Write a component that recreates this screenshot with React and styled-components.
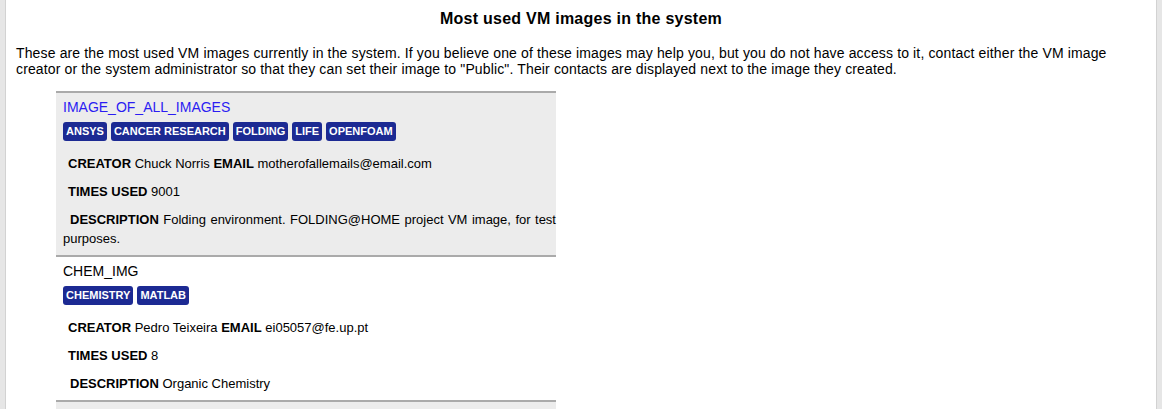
import React from 'react';
import styled, { createGlobalStyle } from 'styled-components';

const GlobalStyle = createGlobalStyle`
  html, body {
    margin: 0;
    padding: 0;
    overflow: hidden;
    background: #e6e6e6;
    font-family: "Liberation Sans", Arial, sans-serif;
    color: #000;
  }
`;

const Frame = styled.div`
  display: flex;
  min-height: 100vh;
  padding: 0 5px;
  background: #e6e6e6;
`;

const Page = styled.div`
  flex: 1;
  background: #fff;
  border-left: 1px solid #d2d2d2;
  border-right: 1px solid #d2d2d2;
  padding: 9px 10px 0;
`;

const Heading = styled.h2`
  margin: 0;
  font-size: 16px;
  font-weight: bold;
  letter-spacing: 0.25px;
  text-align: center;
  line-height: 19px;
`;

const Intro = styled.p`
  margin: 17px 0 14px;
  font-size: 14px;
  line-height: 16px;
  letter-spacing: 0.14px;
`;

const ImageList = styled.ul`
  list-style: none;
  margin: 0;
  padding: 0 0 0 40px;
  width: 500px;
`;

const Card = styled.li`
  background: ${(p) => (p.$shaded ? '#ececec' : '#fff')};
  border-top: 2px solid #aaaaaa;
  padding: 4px 0 7px 7px;
`;

const Title = styled.div`
  font-size: 14px;
  line-height: 20px;
  color: ${(p) => (p.$link ? '#2b1cf2' : '#000')};
`;

const Tags = styled.div`
  display: flex;
  flex-wrap: wrap;
  gap: 4px;
  margin: 5px 0 13px;
`;

const Tag = styled.span`
  background: #1c2a93;
  color: #fff;
  font-size: 11px;
  font-weight: bold;
  line-height: 15px;
  padding: 2px 3px;
  border-radius: 3px;
`;

const Row = styled.p`
  margin: 0 0 9px;
  font-size: 13px;
  line-height: 19px;
  text-align: justify;
  text-indent: ${(p) => p.$indent || 5}px;

  &:last-child {
    margin-bottom: 0;
  }

  b {
    font-weight: bold;
  }
`;

const images = [
  {
    name: 'IMAGE_OF_ALL_IMAGES',
    link: true,
    tags: ['ANSYS', 'CANCER RESEARCH', 'FOLDING', 'LIFE', 'OPENFOAM'],
    creator: 'Chuck Norris',
    email: 'motherofallemails@email.com',
    used: 9001,
    description: 'Folding environment. FOLDING@HOME project VM image, for test purposes.',
  },
  {
    name: 'CHEM_IMG',
    tags: ['CHEMISTRY', 'MATLAB'],
    creator: 'Pedro Teixeira',
    email: 'ei05057@fe.up.pt',
    used: 8,
    description: 'Organic Chemistry',
  },
  {
    name: 'BIO_IMG',
    link: true,
    tags: ['LIFE'],
    creator: 'Pedro Teixeira',
    email: 'ei05057@fe.up.pt',
    used: 3,
    description: 'Bioinformatics tools',
  },
];

export default function App() {
  return (
    <>
      <GlobalStyle />
      <Frame>
        <Page>
          <Heading>Most used VM images in the system</Heading>
          <Intro>
            These are the most used VM images currently in the system. If you believe one of these
            images may help you, but you do not have access to it, contact either the VM image
            creator or the system administrator so that they can set their image to "Public". Their
            contacts are displayed next to the image they created.
          </Intro>
          <ImageList>
            {images.map((img, i) => (
              <Card key={img.name} $shaded={i % 2 === 0}>
                <Title $link={img.link}>{img.name}</Title>
                <Tags>
                  {img.tags.map((t) => (
                    <Tag key={t}>{t}</Tag>
                  ))}
                </Tags>
                <Row>
                  <b>CREATOR</b> {img.creator} <b>EMAIL</b> {img.email}
                </Row>
                <Row>
                  <b>TIMES USED</b> {img.used}
                </Row>
                <Row $indent={7}>
                  <b>DESCRIPTION</b> {img.description}
                </Row>
              </Card>
            ))}
          </ImageList>
        </Page>
      </Frame>
    </>
  );
}
